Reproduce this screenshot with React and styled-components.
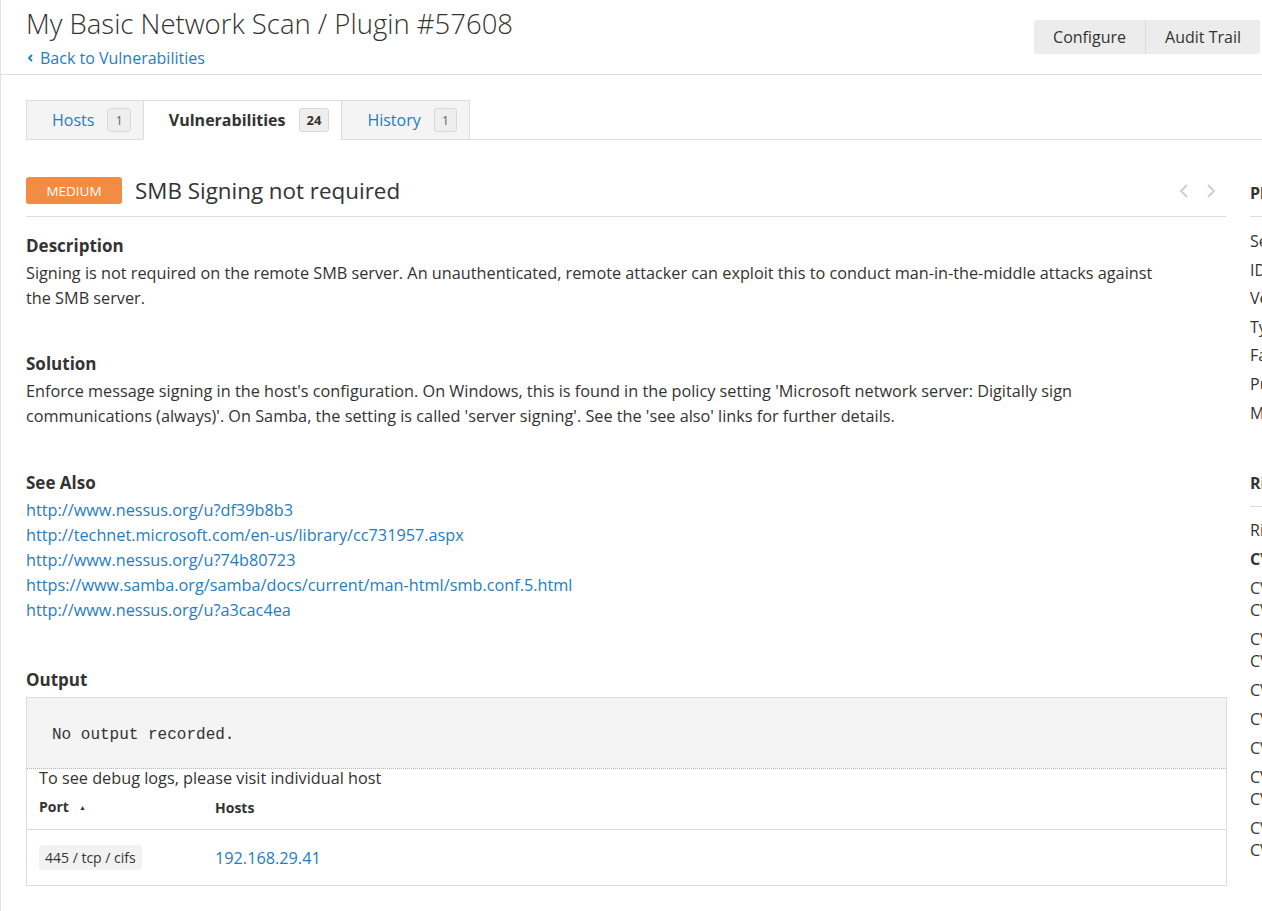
import React from 'react';
import styled, { createGlobalStyle } from 'styled-components';

const GlobalStyle = createGlobalStyle`
  html, body { margin: 0; padding: 0; background: #fff; }
  body {
    font-family: "Open Sans", "Liberation Sans", Arial, sans-serif;
    color: #333;
    overflow: hidden;
  }
  * { box-sizing: border-box; }
`;

const BLUE = '#1f7dc2';
const LINE = '#dddddd';

const Page = styled.div`
  min-height: 911px;
  border-left: 1px solid #e2e2e2;
  overflow: hidden;
`;

const Header = styled.header`
  display: flex;
  align-items: center;
  justify-content: space-between;
  padding: 6px 2px 6px 25px;
  border-bottom: 1px solid ${LINE};
`;

const TitleBlock = styled.div`
  display: flex;
  flex-direction: column;
  gap: 6px;
`;

const Title = styled.h1`
  margin: 0;
  font-size: 27.5px;
  font-weight: 300;
  line-height: 36px;
  color: #333;
  white-space: nowrap;
`;

const BackLink = styled.a`
  display: flex;
  align-items: center;
  gap: 7px;
  font-size: 16px;
  line-height: 20px;
  color: ${BLUE};
  text-decoration: none;
  padding-left: 2px;
`;

const ButtonGroup = styled.div`
  display: flex;
  border-radius: 3px;
  overflow: hidden;
`;

const HeaderButton = styled.button`
  font-family: inherit;
  font-size: 16px;
  color: #333;
  background: #ececec;
  border: none;
  height: 34px;
  padding: 0 19px;
  & + & { border-left: 1px solid #dadada; }
`;

const Content = styled.div`
  padding: 25px 0 0 25px;
`;

const TabBar = styled.nav`
  display: flex;
  border-bottom: 1px solid ${LINE};
`;

const Tab = styled.a`
  display: flex;
  align-items: center;
  gap: 13px;
  height: 40px;
  margin-bottom: -1px;
  padding: 0 12px 1px 25px;
  border: 1px solid ${LINE};
  border-bottom-color: ${p => (p.$active ? '#fff' : LINE)};
  background: ${p => (p.$active ? '#fff' : '#f4f4f4')};
  color: ${p => (p.$active ? '#333' : BLUE)};
  font-size: 16px;
  font-weight: ${p => (p.$active ? 700 : 400)};
  text-decoration: none;
  & + & { margin-left: -1px; }
`;

const Count = styled.span`
  display: inline-flex;
  align-items: center;
  justify-content: center;
  min-width: 23px;
  height: 24px;
  padding: 0 7px;
  border: 1px solid #d8d8d8;
  border-radius: 3px;
  background: #eeeeee;
  color: ${p => (p.$active ? '#333' : '#666')};
  font-size: 13px;
  font-weight: ${p => (p.$active ? 700 : 400)};
`;

const Body = styled.div`
  display: flex;
  align-items: flex-start;
  gap: 23px;
  padding-top: 37px;
`;

const Main = styled.main`
  width: 1201px;
  flex-shrink: 0;
`;

const VulnHeader = styled.div`
  display: flex;
  align-items: center;
  gap: 13px;
  padding-bottom: 12px;
  border-bottom: 1px solid ${LINE};
  margin-right: 1px;
`;

const Severity = styled.span`
  display: inline-flex;
  align-items: center;
  justify-content: center;
  width: 96px;
  height: 27px;
  border-radius: 3px;
  background: #f28c42;
  color: #fff;
  font-size: 13.5px;
  text-transform: uppercase;
`;

const VulnTitle = styled.h2`
  margin: 0;
  font-size: 22.4px;
  font-weight: 400;
  line-height: 27px;
  color: #333;
`;

const Pager = styled.div`
  display: flex;
  gap: 17px;
  margin-left: auto;
  padding-right: 10px;
`;

const Section = styled.section`
  margin-top: ${p => p.$gap}px;
`;

const SectionTitle = styled.h3`
  margin: 0 0 2px;
  font-size: 17px;
  font-weight: 700;
  line-height: 26px;
  color: #333;
`;

const Text = styled.p`
  margin: 0;
  max-width: 1140px;
  font-size: 16.25px;
  line-height: 25px;
  color: #333;
`;

const LinkList = styled.div`
  display: flex;
  flex-direction: column;
`;

const SeeAlsoLink = styled.a`
  font-size: 16.25px;
  line-height: 25px;
  color: ${BLUE};
  text-decoration: none;
`;

const OutputBox = styled.div`
  margin-top: 4px;
  border: 1px solid ${LINE};
`;

const Pre = styled.pre`
  margin: 0;
  padding: 27px 25px 23px;
  background: #f4f4f4;
  border-bottom: 1px dotted #b8b8b8;
  font-family: "Liberation Mono", "Courier New", monospace;
  font-size: 16px;
  line-height: 20px;
  color: #333;
`;

const DebugNote = styled.div`
  padding: 0 12px;
  font-size: 16.25px;
  line-height: 18px;
  color: #333;
`;

const Table = styled.table`
  width: 100%;
  border-collapse: collapse;
`;

const Th = styled.th`
  text-align: left;
  width: ${p => (p.$w ? `${p.$w}px` : 'auto')};
  padding: 10px 12px 11px;
  font-size: 14px;
  font-weight: 700;
  line-height: 20px;
  color: #333;
  border-bottom: 1px solid ${LINE};
`;

const SortArrow = styled.span`
  margin-left: 10px;
  font-size: 7px;
  vertical-align: 2px;
`;

const Td = styled.td`
  padding: 15px 12px;
`;

const PortTag = styled.span`
  display: inline-block;
  padding: 0 6px;
  border-radius: 3px;
  background: #f2f2f2;
  font-size: 14px;
  line-height: 25px;
  color: #333;
`;

const HostLink = styled.a`
  font-size: 16.25px;
  color: ${BLUE};
  text-decoration: none;
`;

const Sidebar = styled.aside`
  width: 300px;
  flex-shrink: 0;
`;

const SideHeading = styled.h4`
  margin: ${p => p.$gap || 0}px 0 0;
  padding: 5px 0 12px;
  font-size: 16px;
  font-weight: 700;
  line-height: 22px;
  color: #333;
  border-bottom: 1px solid ${LINE};
  white-space: nowrap;
`;

const SideList = styled.ul`
  list-style: none;
  margin: ${p => p.$top}px 0 0;
  padding: 0;
  & > li + li { margin-top: ${p => p.$spacing}px; }
`;

const SideItem = styled.li`
  font-size: 16px;
  line-height: 22px;
  font-weight: ${p => (p.$bold ? 700 : 400)};
  color: #333;
  white-space: nowrap;
`;

const SideValue = styled.span`
  display: ${p => (p.$stack ? 'block' : 'inline')};
`;

const Chevron = ({ dir }) => (
  <svg width="10" height="14" viewBox="0 0 10 14" fill="none">
    <polyline
      points={dir === 'left' ? '8,1 2,7 8,13' : '2,1 8,7 2,13'}
      stroke="#cfcfcf"
      strokeWidth="2"
      strokeLinejoin="miter"
    />
  </svg>
);

const SmallChevron = () => (
  <svg width="5" height="8" viewBox="0 0 5 8" fill="none">
    <polyline points="4,1 1,4 4,7" stroke={BLUE} strokeWidth="1.8" />
  </svg>
);

const links = [
  'http://www.nessus.org/u?df39b8b3',
  'http://technet.microsoft.com/en-us/library/cc731957.aspx',
  'http://www.nessus.org/u?74b80723',
  'https://www.samba.org/samba/docs/current/man-html/smb.conf.5.html',
  'http://www.nessus.org/u?a3cac4ea',
];

const pluginDetails = [
  ['Severity:', 'Medium'],
  ['ID:', '57608'],
  ['Version:', '1.16'],
  ['Type:', 'remote'],
  ['Family:', 'Misc.'],
  ['Published:', 'January 19, 2012'],
  ['Modified:', 'October 4, 2018'],
];

const riskInfo = [
  { l: 'Risk Factor:', v: 'Medium' },
  { l: 'CVSS v3.0 Base Score', v: '5.3', bold: true },
  { l: 'CVSS v3.0 Vector:', v: 'CVSS:3.0/AV:N/AC:L/PR:N/UI:N/S:U/C:N/I:L/A:N', stack: true },
  { l: 'CVSS v3.0 Temporal Vector:', v: 'CVSS:3.0/E:U/RL:O/RC:C', stack: true },
  { l: 'CVSS v3.0 Temporal Score:', v: '4.6' },
  { l: 'CVSS Base Score:', v: '5.0' },
  { l: 'CVSS Temporal Score:', v: '3.7' },
  { l: 'CVSS Vector:', v: 'CVSS2#AV:N/AC:L/Au:N/C:N/I:P/A:N', stack: true },
  { l: 'CVSS Temporal Vector:', v: 'CVSS2#E:U/RL:OF/RC:C', stack: true },
];

export default function App() {
  return (
    <>
      <GlobalStyle />
      <Page>
        <Header>
          <TitleBlock>
            <Title>My Basic Network Scan / Plugin #57608</Title>
            <BackLink href="#">
              <SmallChevron />
              Back to Vulnerabilities
            </BackLink>
          </TitleBlock>
          <ButtonGroup>
            <HeaderButton>Configure</HeaderButton>
            <HeaderButton>Audit Trail</HeaderButton>
          </ButtonGroup>
        </Header>

        <Content>
          <TabBar>
            <Tab href="#">
              Hosts <Count>1</Count>
            </Tab>
            <Tab href="#" $active>
              Vulnerabilities <Count $active>24</Count>
            </Tab>
            <Tab href="#">
              History <Count>1</Count>
            </Tab>
          </TabBar>

          <Body>
            <Main>
              <VulnHeader>
                <Severity>Medium</Severity>
                <VulnTitle>SMB Signing not required</VulnTitle>
                <Pager>
                  <Chevron dir="left" />
                  <Chevron dir="right" />
                </Pager>
              </VulnHeader>

              <Section $gap={16}>
                <SectionTitle>Description</SectionTitle>
                <Text>
                  Signing is not required on the remote SMB server. An unauthenticated, remote attacker can
                  exploit this to conduct man-in-the-middle attacks against the SMB server.
                </Text>
              </Section>

              <Section $gap={40}>
                <SectionTitle>Solution</SectionTitle>
                <Text>
                  Enforce message signing in the host's configuration. On Windows, this is found in the policy
                  setting 'Microsoft network server: Digitally sign communications (always)'. On Samba, the
                  setting is called 'server signing'. See the 'see also' links for further details.
                </Text>
              </Section>

              <Section $gap={41}>
                <SectionTitle>See Also</SectionTitle>
                <LinkList>
                  {links.map(l => (
                    <SeeAlsoLink key={l} href="#">
                      {l}
                    </SeeAlsoLink>
                  ))}
                </LinkList>
              </Section>

              <Section $gap={44}>
                <SectionTitle>Output</SectionTitle>
                <OutputBox>
                  <Pre>No output recorded.</Pre>
                  <DebugNote>To see debug logs, please visit individual host</DebugNote>
                  <Table>
                    <thead>
                      <tr>
                        <Th $w={176}>
                          Port<SortArrow>▲</SortArrow>
                        </Th>
                        <Th>Hosts</Th>
                      </tr>
                    </thead>
                    <tbody>
                      <tr>
                        <Td>
                          <PortTag>445 / tcp / cifs</PortTag>
                        </Td>
                        <Td>
                          <HostLink href="#">192.168.29.41</HostLink>
                        </Td>
                      </tr>
                    </tbody>
                  </Table>
                </OutputBox>
              </Section>
            </Main>

            <Sidebar>
              <SideHeading>Plugin Details</SideHeading>
              <SideList $top={13} $spacing={6.6}>
                {pluginDetails.map(([l, v]) => (
                  <SideItem key={l}>
                    {l} <SideValue>{v}</SideValue>
                  </SideItem>
                ))}
              </SideList>
              <SideHeading $gap={43}>Risk Information</SideHeading>
              <SideList $top={12} $spacing={7}>
                {riskInfo.map(r => (
                  <SideItem key={r.l} $bold={r.bold}>
                    {r.l} <SideValue $stack={r.stack}>{r.v}</SideValue>
                  </SideItem>
                ))}
              </SideList>
            </Sidebar>
          </Body>
        </Content>
      </Page>
    </>
  );
}
